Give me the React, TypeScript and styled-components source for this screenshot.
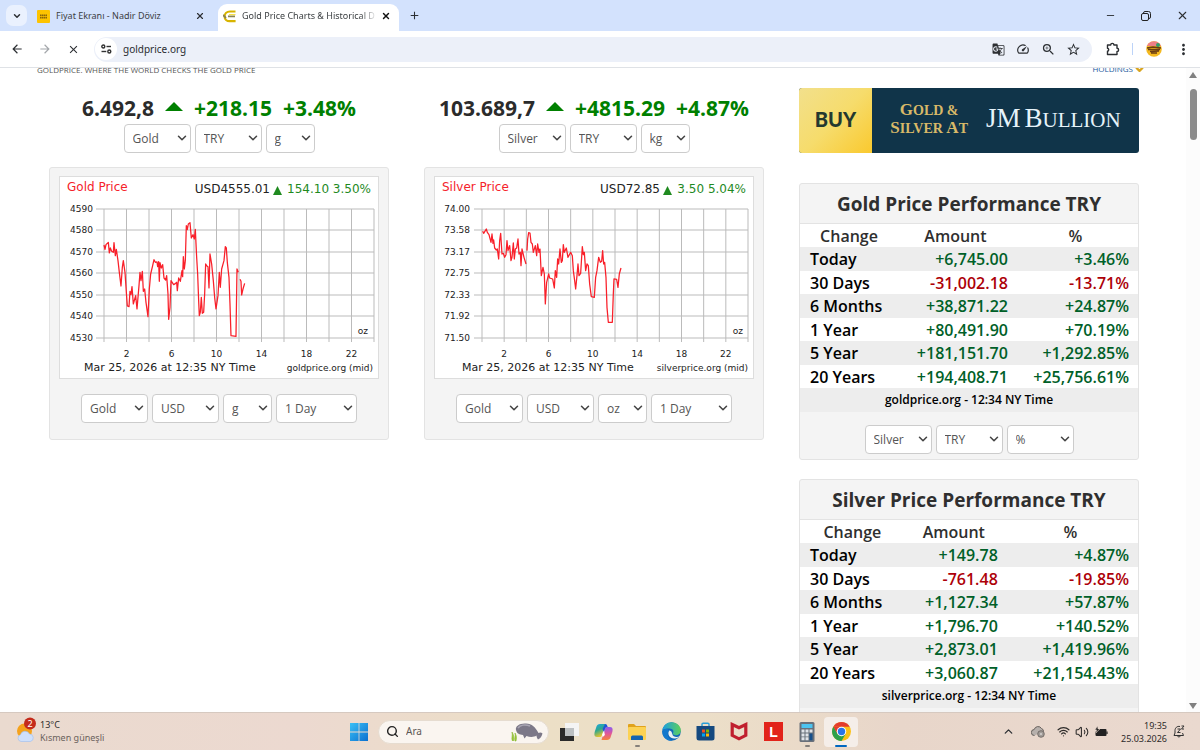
import React from 'react';
import styled, { createGlobalStyle } from 'styled-components';
import {
  MdAdd, MdArrowBack, MdArrowForward, MdClose, MdGTranslate, MdMoreVert, MdSpeed, MdStarBorder, MdZoomIn,
} from 'react-icons/md';
import { ChevronDown, ChevronUp, Minus, Search, Volume2, Wifi, X } from 'lucide-react';

const siteFont = '"Open Sans", "Noto Sans", sans-serif';
const shellFont = '"Noto Sans", "Open Sans", sans-serif';

const GlobalStyle = createGlobalStyle`
  *, *::before, *::after { box-sizing: border-box; }
  html, body, #root { height: 100%; }
  body { margin: 0; overflow: hidden; background: #fff; font-family: ${siteFont}; }
  button, input, select { font: inherit; color: inherit; margin: 0; }
  h1, h2, p { margin: 0; }
  svg { display: block; flex: none; }
`;

const Desktop = styled.div`
  display: flex;
  flex-direction: column;
  height: 100vh;
`;

/* ---------- browser frame ---------- */

const TabStrip = styled.div`
  display: flex;
  align-items: center;
  flex: none;
  height: 31px;
  padding: 0 8px 0 6px;
  background: #d3e2fd;
  font: 9px/16px ${shellFont};
  color: #3c4043;
`;

const IconButton = styled.button<{ $w?: number; $h?: number; $bg?: string; $color?: string }>`
  display: flex;
  align-items: center;
  justify-content: center;
  flex: none;
  width: ${(p) => p.$w ?? 20}px;
  height: ${(p) => p.$h ?? 20}px;
  padding: 0;
  border: 0;
  border-radius: 7px;
  background: ${(p) => p.$bg ?? 'transparent'};
  color: ${(p) => p.$color ?? '#2c2f33'};
`;

const Tab = styled.div<{ $active?: boolean }>`
  display: flex;
  align-items: center;
  align-self: flex-end;
  flex: 0 1 auto;
  width: ${(p) => (p.$active ? 181 : 187)}px;
  height: 27px;
  margin-left: ${(p) => (p.$active ? 0 : 4)}px;
  padding: 0 ${(p) => (p.$active ? 4 : 9)}px 3px ${(p) => (p.$active ? 5 : 6)}px;
  border-radius: 9px 9px 0 0;
  background: ${(p) => (p.$active ? '#fff' : 'transparent')};
`;

const TabTitle = styled.button<{ $fade?: boolean }>`
  flex: 1;
  min-width: 0;
  margin-left: 6px;
  padding: 0;
  border: 0;
  background: none;
  text-align: left;
  white-space: nowrap;
  overflow: hidden;
  ${(p) => p.$fade && 'mask-image: linear-gradient(90deg, #000 88%, transparent);'}
`;

const WindowControls = styled.div`
  display: flex;
  gap: 16px;
  margin-left: auto;
`;

const Toolbar = styled.div`
  display: flex;
  align-items: center;
  flex: none;
  height: 37px;
  padding: 0 8px 0 7px;
  border-bottom: 1px solid #dfe2e6;
  background: #fff;
`;

const NavButtons = styled.div`
  display: flex;
  gap: 8px;
`;

const AddressBar = styled.div`
  display: flex;
  align-items: center;
  flex: 1;
  height: 25px;
  margin-left: 11px;
  padding: 0 9px 0 1px;
  border-radius: 13px;
  background: #ecf0f9;
`;

const SiteInfo = styled.button`
  display: flex;
  align-items: center;
  justify-content: center;
  width: 22px;
  height: 22px;
  padding: 0;
  border: 0;
  border-radius: 50%;
  background: #fff;
`;

const AddressInput = styled.input`
  flex: 1;
  min-width: 0;
  padding: 0 0 0 6px;
  border: 0;
  outline: 0;
  background: none;
  font: 10px/16px ${shellFont};
  color: #2a2c30;
`;

const AddressActions = styled.div`
  display: flex;
  gap: 5px;
`;

const ToolbarEnd = styled.div`
  display: flex;
  align-items: center;
  gap: 8px;
  margin-left: 11px;
`;

const ToolbarDivider = styled.span`
  width: 1px;
  height: 12px;
  margin: 0 1px;
  background: #bcd3f8;
`;

/* ---------- web page ---------- */

const Viewport = styled.div`
  display: flex;
  flex: 1;
  min-height: 0;
`;

const Page = styled.main`
  flex: 1;
  min-width: 0;
  overflow: hidden;
`;

const TopLine = styled.div`
  display: flex;
  justify-content: space-between;
  align-items: flex-end;
  height: 8px;
  padding: 0 41px 0 37px;
  overflow: hidden;
  font-size: 8px;
  line-height: 12px;
  text-transform: uppercase;
  color: #555;
`;

const HoldingsLink = styled.a`
  display: flex;
  align-items: center;
  gap: 1px;
  line-height: 14px;
  color: #1a5ca0;
  text-decoration: none;
`;

const Columns = styled.div`
  display: grid;
  grid-template-columns: repeat(3, minmax(0, 1fr));
  gap: 35px;
  padding: 12px 47px 0 49px;
`;

const Column = styled.section`
  display: flex;
  flex-direction: column;
`;

const SpotPrice = styled.h1`
  display: flex;
  align-items: center;
  justify-content: center;
  gap: 11px;
  height: 36px;
  padding-top: 4px;
  font-size: 21px;
  line-height: 28px;
  font-weight: 700;
  white-space: nowrap;
  color: #2b2b2b;
`;

const Gain = styled.span`
  color: #008000;
`;

const SelectRow = styled.div`
  display: flex;
  justify-content: center;
  gap: 4px;
`;

const SelectBox = styled.label<{ $w: number }>`
  position: relative;
  display: block;
  width: ${(p) => p.$w}px;
  color: #555;

  svg {
    position: absolute;
    top: 7px;
    right: 2px;
    color: #444;
    pointer-events: none;
  }
`;

const NativeSelect = styled.select`
  display: block;
  width: 100%;
  height: 29px;
  padding: 0 8px;
  border: 1px solid #ccc;
  border-radius: 4px;
  background: #fff;
  appearance: none;
  font-size: 12px;
  line-height: 16px;
`;

const ChartPanel = styled.div`
  display: flex;
  flex-direction: column;
  gap: 15px;
  margin-top: 14px;
  padding: 8px 9px 16px;
  border: 1px solid #e3e3e3;
  border-radius: 3px;
  background: #f4f4f4;
`;

const ChartFrame = styled.svg`
  width: 100%;
  height: auto;
  font-family: "DejaVu Sans", sans-serif;
  font-size: 9px;
  fill: #222;
`;

const Banner = styled.a`
  display: flex;
  height: 65px;
  margin: 0 0 30px;
  border-radius: 3px;
  overflow: hidden;
  background: #103449;
  text-decoration: none;
`;

const BannerBuy = styled.span`
  display: flex;
  align-items: center;
  justify-content: center;
  width: 73px;
  padding-bottom: 3px;
  background: linear-gradient(135deg, #f2e08c, #f6dc6c 50%, #fac92e);
  font: 900 20px/24px Lato, sans-serif;
  color: #24382f;
`;

const BannerOffer = styled.span`
  flex: 1;
  display: flex;
  align-items: center;
  justify-content: center;
  gap: 18px;
  padding-bottom: 4px;
  font-family: "Liberation Serif", serif;
  text-transform: uppercase;
  white-space: nowrap;
`;

const Capital = styled.span<{ $size: number }>`
  display: inline-block;
  &::first-letter { font-size: ${(p) => p.$size}px; }
`;

const BannerMetals = styled.span`
  font-size: 14px;
  line-height: 17px;
  font-weight: 700;
  text-align: center;
  color: #d8b968;
`;

const BannerDealer = styled.span`
  display: flex;
  align-items: baseline;
  gap: 4px;
  font-size: 21px;
  line-height: 32px;
  color: #e6f3fa;
`;

const DealerInitials = styled.span`
  font-size: 27px;
`;

const PerformancePanel = styled.div`
  margin-bottom: 19px;
  border: 1px solid #e3e3e3;
  border-radius: 3px;
  background: #f4f4f4;
`;

const PanelTitle = styled.h2`
  height: 40px;
  border-bottom: 1px solid #e3e3e3;
  font-size: 19px;
  line-height: 40px;
  font-weight: 700;
  text-align: center;
  color: #2f2f2f;
`;

const PerformanceTable = styled.table`
  width: 100%;
  border-collapse: collapse;
  table-layout: fixed;
  background: #fff;
  font-size: 16px;
  line-height: 20px;
  font-weight: 600;
  color: #000;

  tr { height: 24px; }
  th, td { padding: 0 5px; font-weight: 600; }
  thead th { color: #2f2f2f; }
  tbody th { padding-left: 10px; text-align: left; }
  tbody td:last-child { padding-right: 9px; }
  thead tr, tbody tr:nth-child(even) { height: 23px; }
  tbody tr:nth-child(odd), tfoot tr { background: #ededed; }
  tfoot td { padding: 0; text-align: center; font-size: 12px; }
`;

const Figure = styled.td<{ $down: boolean }>`
  text-align: right;
  color: ${(p) => (p.$down ? '#ad0008' : '#006028')};
`;

const PanelControls = styled.div`
  padding: 13px 0 5px;
`;

const Scrollbar = styled.div`
  display: flex;
  flex-direction: column;
  align-items: center;
  width: 14px;
  padding: 4px 0 3px;
  background: #fcfcfc;
`;

const ScrollThumb = styled.div`
  width: 7px;
  height: 8%;
  margin: 11px 0 auto;
  border-radius: 4px;
  background: #8b8b8b;
`;

/* ---------- taskbar ---------- */

const Taskbar = styled.footer`
  display: grid;
  grid-template-columns: 1fr auto 1fr;
  align-items: center;
  flex: none;
  height: 38px;
  border-top: 1px solid #d6c9c0;
  background: linear-gradient(90deg, #eadacf 0%, #ecd9d0 25%, #ecdfc6 45%, #ecdfc8 58%, #e8d6ca 75%, #ead9cf 100%);
  font: 10px/13px ${shellFont};
  color: #2d2b2a;
`;

const Weather = styled.button`
  display: flex;
  align-items: center;
  gap: 4px;
  padding: 0 0 2px 16px;
  border: 0;
  background: none;
  text-align: left;
`;

const WeatherText = styled.span`
  display: grid;
  font-size: 9px;
`;

const WeatherNote = styled.span`
  color: #6a625d;
`;

const Apps = styled.div`
  display: flex;
  align-items: center;
`;

const AppButton = styled.button<{ $current?: boolean }>`
  display: flex;
  align-items: center;
  justify-content: center;
  position: relative;
  width: 34px;
  height: 30px;
  padding: 0;
  border: 0;
  border-radius: 4px;
  background: ${(p) => (p.$current ? '#f5eee9' : 'transparent')};
`;

const RunningMark = styled.span<{ $current?: boolean }>`
  position: absolute;
  bottom: 0;
  width: ${(p) => (p.$current ? 12 : 5)}px;
  height: 2px;
  border-radius: 1px;
  background: ${(p) => (p.$current ? '#0067c0' : '#85807b')};
`;

const SearchBox = styled.label`
  display: flex;
  align-items: center;
  width: 171px;
  height: 24px;
  margin: 0 3px 0 2px;
  padding: 0 5px 0 7px;
  border: 1px solid #e6dcd0;
  border-radius: 12px;
  background: #faf5f0;
`;

const SearchInput = styled.input`
  flex: 1;
  min-width: 0;
  margin-left: 7px;
  padding: 0;
  border: 0;
  outline: 0;
  background: none;
  &::placeholder { color: #5c5855; opacity: 1; }
`;

const Tray = styled.div`
  display: flex;
  align-items: center;
  justify-content: flex-end;
  padding-right: 15px;
`;

const TrayGroup = styled.div`
  display: flex;
  align-items: center;
  gap: 5px;
  margin-left: 12px;
`;

const Clock = styled.div`
  margin: 0 6px 0 13px;
  font-size: 9px;
  text-align: right;
`;

/* ---------- data ---------- */

interface ChartSpec {
  title: string;
  price: string;
  priceEnd: number;
  change: string;
  labels: string[];
  labelEnd: number;
  plotLeft: number;
  plotRight: number;
  dateLeft: number;
  site: string;
  series: string[];
}

const goldChart: ChartSpec = {
  title: 'Gold Price',
  price: 'USD4555.01',
  priceEnd: 211,
  change: '154.10 3.50%',
  labels: ['4590', '4580', '4570', '4560', '4550', '4540', '4530'],
  labelEnd: 34,
  plotLeft: 45,
  plotRight: 315,
  dateLeft: 25,
  site: 'goldprice.org (mid)',
  series: [
    '191,253 194,266 197,252 204,245 207,277 210,262 214,272 219,275 221,246 225,285 228,266 233,300 237,335 242,376 246,320 249,300 254,335 258,395 261,436 266,438 269,392 272,402 275,378 279,430 286,405 290,445 296,375 299,335 302,360 306,332 309,392 313,385 317,425 323,468 327,385 331,340 337,315 341,297 345,305 350,304 352,318 355,303 357,362 359,306 363,322 367,312 371,352 376,358 379,345 383,400 385,476 389,440 392,360 396,366 400,372 405,369 409,365 411,390 415,352 420,362 425,330 427,348 429,288 432,325 435,300 438,195 441,207 444,190 449,186 453,232 458,222 462,235 465,206 469,290 472,340 475,420 477,465 480,455 483,410 486,458 490,455 493,400 496,310 499,315 503,318 506,382 509,280 514,310 519,360 523,410 527,445 530,425 533,405 537,335 540,380 544,325 551,300 555,258 558,262 561,305 566,350 569,430 572,525 587,527 590,325 594,335',
    '599,356 602,362 604,403 608,385 613,368',
  ],
};

const silverChart: ChartSpec = {
  title: 'Silver Price',
  price: 'USD72.85',
  priceEnd: 226,
  change: '3.50 5.04%',
  labels: ['74.00', '73.58', '73.17', '72.75', '72.33', '71.92', '71.50'],
  labelEnd: 36,
  plotLeft: 48,
  plotRight: 314,
  dateLeft: 28,
  site: 'silverprice.org (mid)',
  series: [
    '202,212 205,218 210,210 213,205 216,215 221,222 227,245 230,220 233,248 235,238 238,262 243,268 246,265 250,295 253,240 256,218 260,280 264,278 268,290 272,282 275,240 278,270 283,255 287,300 290,290 294,247 297,295 300,265 304,262 308,235 311,280 315,275 317,315 320,265 326,290 332,310',
    '335,270 337,235 340,216 344,217 347,245 351,250 354,275 360,255 364,285 367,250 371,275 374,265 378,345 383,320 387,340 390,430 394,365 400,340 403,352 412,355 417,382 420,330 424,350 427,295 430,310 434,265 438,305 441,300 444,252 447,275 453,262 458,290 466,275 471,285 474,330 478,360 481,385 485,345 488,310 491,345 496,338 501,258 504,282 507,275 511,330 515,310 519,315 523,370 528,408 537,410 541,350 545,330 550,290 555,305 559,302 562,270 565,310 568,305 572,350 575,440 579,485 591,485 594,400 596,355 604,356 608,380 612,340 617,322',
  ],
};

type PerfRow = [string, string, string];

const goldRows: PerfRow[] = [
  ['Today', '+6,745.00', '+3.46%'],
  ['30 Days', '-31,002.18', '-13.71%'],
  ['6 Months', '+38,871.22', '+24.87%'],
  ['1 Year', '+80,491.90', '+70.19%'],
  ['5 Year', '+181,151.70', '+1,292.85%'],
  ['20 Years', '+194,408.71', '+25,756.61%'],
];

const silverRows: PerfRow[] = [
  ['Today', '+149.78', '+4.87%'],
  ['30 Days', '-761.48', '-19.85%'],
  ['6 Months', '+1,127.34', '+57.87%'],
  ['1 Year', '+1,796.70', '+140.52%'],
  ['5 Year', '+2,873.01', '+1,419.96%'],
  ['20 Years', '+3,060.87', '+21,154.43%'],
];

/* ---------- components ---------- */

function Select({ label, value, options, width = 67 }: { label: string; value: string; options: string[]; width?: number }) {
  return (
    <SelectBox $w={width}>
      <NativeSelect aria-label={label} defaultValue={value}>
        {options.map((o) => <option key={o}>{o}</option>)}
      </NativeSelect>
      <ChevronDown size={14} strokeWidth={2.600} />
    </SelectBox>
  );
}

const metals = ['Gold', 'Silver'];
const currencies = ['USD', 'TRY', 'EUR'];
const units = ['oz', 'g', 'kg'];
const periods = ['1 Day', '1 Month', '1 Year'];

function Chart({ spec }: { spec: ChartSpec }) {
  const step = (spec.plotRight - spec.plotLeft) / 12;
  const xs = Array.from({ length: 13 }, (_, i) => spec.plotLeft + i * step);
  const ys = [33, 54, 76, 97, 119, 140, 162];
  return (
    <ChartFrame viewBox="0 0 320 203" role="img" aria-label={spec.title}>
      <rect x="0.5" y="0.5" width="319" height="202" fill="#fff" stroke="#ddd" />
      <g stroke="#bbb">
        {xs.map((x) => <line key={x} x1={x} x2={x} y1="33" y2="166" />)}
        {ys.map((y) => <line key={y} x1={spec.plotLeft - 8} x2={spec.plotRight} y1={y} y2={y} />)}
      </g>
      <g transform="scale(0.3333) translate(-56 -46)" fill="none" stroke="#f9202a" strokeWidth="3.800" strokeLinejoin="round">
        {spec.series.map((points) => <polyline key={points} points={points} />)}
      </g>
      <text x="8" y="15" fontSize="12" fill="#f5222a">{spec.title}</text>
      <text x={spec.priceEnd} y="17" fontSize="12" textAnchor="end">{spec.price}</text>
      <path d={`M${spec.priceEnd + 3} 19 l4.5 -9 l4.5 9 z`} fill="#1f8a1f" />
      <text x="312" y="17" fontSize="12" textAnchor="end" fill="#1f8a1f">{spec.change}</text>
      {spec.labels.map((l, i) => <text key={l} x={spec.labelEnd} y={ys[i] + 3} textAnchor="end">{l}</text>)}
      {[2, 6, 10, 14, 18, 22].map((h, i) => (
        <text key={h} x={xs[1 + i * 2]} y="181" textAnchor="middle">{h}</text>
      ))}
      <text x="309" y="158" textAnchor="end">oz</text>
      <text x={spec.dateLeft} y="195" fontSize="11">Mar 25, 2026 at 12:35 NY Time</text>
      <text x="314" y="195" textAnchor="end">{spec.site}</text>
    </ChartFrame>
  );
}

interface SpotProps {
  price: string; change: string; percent: string;
  metal: string; unit: string; chart: ChartSpec; chartUnit: string;
}

function SpotColumn({ price, change, percent, metal, unit, chart, chartUnit }: SpotProps) {
  return (
    <Column>
      <SpotPrice>
        <span>{price}</span>
        <svg width="18" height="12" viewBox="0 0 18 12"><path d="M0 9L9 0l9 9z" fill="#008000" /></svg>
        <Gain>{change}</Gain>
        <Gain>{percent}</Gain>
      </SpotPrice>
      <SelectRow>
        <Select label="Metal" value={metal} options={metals} />
        <Select label="Currency" value="TRY" options={currencies} />
        <Select label="Unit" value={unit} options={units} width={49} />
      </SelectRow>
      <ChartPanel>
        <Chart spec={chart} />
        <SelectRow>
          <Select label="Chart metal" value="Gold" options={metals} />
          <Select label="Chart currency" value="USD" options={currencies} />
          <Select label="Chart unit" value={chartUnit} options={units} width={49} />
          <Select label="Chart period" value="1 Day" options={periods} width={81} />
        </SelectRow>
      </ChartPanel>
    </Column>
  );
}

function Performance({ title, rows, widths, source }: { title: string; rows: PerfRow[]; widths: string[]; source: string }) {
  return (
    <PerformancePanel>
      <PanelTitle>{title}</PanelTitle>
      <PerformanceTable>
        <colgroup>{widths.map((w, i) => <col key={i} width={w} />)}</colgroup>
        <thead>
          <tr><th scope="col">Change</th><th scope="col">Amount</th><th scope="col">%</th></tr>
        </thead>
        <tbody>
          {rows.map(([period, amount, percent]) => (
            <tr key={period}>
              <th scope="row">{period}</th>
              <Figure $down={amount.startsWith('-')}>{amount}</Figure>
              <Figure $down={percent.startsWith('-')}>{percent}</Figure>
            </tr>
          ))}
        </tbody>
        <tfoot>
          <tr><td colSpan={3}>{source} - 12:34 NY Time</td></tr>
        </tfoot>
      </PerformanceTable>
      <PanelControls>
        <SelectRow>
          <Select label="Metal" value="Silver" options={metals} />
          <Select label="Currency" value="TRY" options={currencies} />
          <Select label="Measure" value="%" options={['%', 'Amount']} />
        </SelectRow>
      </PanelControls>
    </PerformancePanel>
  );
}

function BrowserFrame() {
  return (
    <>
      <TabStrip>
        <IconButton $w={21} $h={21} $bg="#eaf1fe" aria-label="Search tabs"><ChevronDown size={10} strokeWidth={3.5} /></IconButton>
        <Tab>
          <svg width="13" height="13" viewBox="0 0 13 13">
            <rect width="13" height="13" rx="1" fill="#fdc300" />
            <path d="M3 5.200h7M3 7.600h7" stroke="#8a6508" strokeWidth="1.600" strokeDasharray="1.600 .400" />
          </svg>
          <TabTitle>Fiyat Ekranı - Nadir Döviz</TabTitle>
          <IconButton $w={18} $h={18} aria-label="Close tab"><X size={10} strokeWidth={2.800} /></IconButton>
        </Tab>
        <Tab $active>
          <svg width="13" height="13" viewBox="0 0 13 13" fill="none">
            <path d="M12.500 1.500H7C3.500 1.500 1.600 4 1.600 6.400c0 3 2.300 4.800 5 4.800h6" stroke="#d8b400" strokeWidth="2.200" />
            <path d="M0 5l3 3M5 6.400h7" stroke="#8b8350" strokeWidth="1.800" />
            <path d="M6 4.600h6.500" stroke="#f6e34c" strokeWidth="1.200" />
          </svg>
          <TabTitle $fade>Gold Price Charts &amp; Historical D</TabTitle>
          <IconButton $w={18} $h={18} $color="#111" aria-label="Close tab"><X size={10} strokeWidth={3.400} /></IconButton>
        </Tab>
        <IconButton $w={30} aria-label="New tab"><MdAdd size={13} /></IconButton>
        <WindowControls>
          <IconButton aria-label="Minimize"><Minus size={11} strokeWidth={2} /></IconButton>
          <IconButton aria-label="Restore">
            <svg width="10" height="10" viewBox="0 0 10 10" fill="none" stroke="#222" strokeWidth="1">
              <rect x="0.5" y="2.500" width="7" height="7" rx="1.500" />
              <path d="M2.500 2.500V2A1.500 1.500 0 0 1 4 .5h3.500a2 2 0 0 1 2 2V6A1.500 1.500 0 0 1 8 7.500h-.5" />
            </svg>
          </IconButton>
          <IconButton aria-label="Close"><X size={13} strokeWidth={2} /></IconButton>
        </WindowControls>
      </TabStrip>
      <Toolbar>
        <NavButtons>
          <IconButton aria-label="Back"><MdArrowBack size={14} /></IconButton>
          <IconButton aria-label="Forward" $color="#a4a7ab"><MdArrowForward size={14} /></IconButton>
          <IconButton aria-label="Stop"><MdClose size={13} /></IconButton>
        </NavButtons>
        <AddressBar>
          <SiteInfo aria-label="Site information">
            <svg width="11" height="10" viewBox="0 0 11 10" fill="none" stroke="#333" strokeWidth="1.400">
              <circle cx="2.300" cy="2.500" r="1.500" /><path d="M5.500 2.500H10" />
              <circle cx="8.300" cy="7.500" r="1.500" /><path d="M.5 7.500h4.800" />
            </svg>
          </SiteInfo>
          <AddressInput aria-label="Address" defaultValue="goldprice.org" />
          <AddressActions>
            <IconButton aria-label="Translate"><MdGTranslate size={13} /></IconButton>
            <IconButton aria-label="Performance"><MdSpeed size={14} /></IconButton>
            <IconButton aria-label="Zoom"><MdZoomIn size={15} /></IconButton>
            <IconButton aria-label="Bookmark"><MdStarBorder size={15} /></IconButton>
          </AddressActions>
        </AddressBar>
        <ToolbarEnd>
          <IconButton aria-label="Extensions">
            <svg width="14" height="14" viewBox="0 0 14 14" fill="none" stroke="#2c2f33" strokeWidth="1.400" strokeLinejoin="round">
              <path d="M1.500 3h3.200a1.600 1.600 0 0 1 3.200 0h3.100v3.300a1.600 1.600 0 0 1 0 3.200V12.500h-9.500V9.300a1.600 1.600 0 0 0 0-3.100z" />
            </svg>
          </IconButton>
          <ToolbarDivider />
          <IconButton $w={24} aria-label="Profile">
            <svg width="16" height="16" viewBox="0 0 16 16">
              <clipPath id="avatar"><circle cx="8" cy="8" r="7.800" /></clipPath>
              <g clipPath="url(#avatar)">
                <rect width="16" height="16" fill="#f4b91f" />
                <path d="M0 0h16v5H0z" fill="#ee7f86" />
                <circle cx="12" cy="4" r="2" fill="#2f9f6a" />
                <path d="M1 7l6-1 8 1M2 8.500h12M4 10.500l9-.5M5 12l6 0" stroke="#6b3d12" strokeWidth="1.400" />
              </g>
            </svg>
          </IconButton>
          <IconButton $w={18} aria-label="Menu"><MdMoreVert size={17} /></IconButton>
        </ToolbarEnd>
      </Toolbar>
    </>
  );
}

function TaskbarApp({ name, running, current, children }: { name: string; running?: boolean; current?: boolean; children: React.ReactNode }) {
  return (
    <AppButton aria-label={name} $current={current}>
      {children}
      {(running || current) && <RunningMark $current={current} />}
    </AppButton>
  );
}

function DesktopTaskbar() {
  return (
    <Taskbar>
      <Weather>
        <svg width="20" height="28" viewBox="0 0 20 28">
          <circle cx="8.500" cy="14" r="7.500" fill="#f5a21c" />
          <path d="M5 24.500a3.500 3.500 0 0 1-.5-6.800 4.800 4.800 0 0 1 9-.7 3.800 3.800 0 0 1 .8 7.500z" fill="#cfe0fb" stroke="#9cbdf0" strokeWidth=".6" />
          <circle cx="14" cy="6.500" r="6" fill="#c42b1c" />
          <text x="14" y="10" fontSize="9" textAnchor="middle" fill="#fff">2</text>
        </svg>
        <WeatherText><span>13°C</span><WeatherNote>Kısmen güneşli</WeatherNote></WeatherText>
      </Weather>
      <Apps>
        <TaskbarApp name="Start">
          <svg width="18" height="18" viewBox="0 0 18 18">
            <linearGradient id="win" x2="1" y2="1"><stop stopColor="#3bc0f5" /><stop offset="1" stopColor="#0a6fd0" /></linearGradient>
            <path d="M0 0h8.600v8.600H0zM9.400 0H18v8.600H9.400zM0 9.400h8.600V18H0zM9.400 9.400H18V18H9.400z" fill="url(#win)" />
          </svg>
        </TaskbarApp>
        <SearchBox>
          <Search size={13} strokeWidth={2.600} color="#222" />
          <SearchInput placeholder="Ara" aria-label="Ara" />
          <svg width="33" height="20" viewBox="0 0 33 20">
            <path d="M2.500 19C1 16 3 14 2 10c2 3 2 6 1.500 9M5 19c-1-3 1-5 0-8 2 3 1.500 6 1 8z" fill="#9cc93c" stroke="#86b52c" strokeWidth=".6" />
            <path d="M6 8C5 4 10 1 16 1.500c6 0 9.500 4 12.500 9.500 1.500-1 3-.5 4 .5-.8 3-2 5-4.500 6-1-1.500-1.500-2.500-1.500-4-3 2-7 1.500-10 .5l-2 2.500-1.500-3.500C9.500 12.500 7 12 6 8z" fill="#7c7888" />
            <path d="M8 6c2-3 7-4 12-2" stroke="#a9a5b3" strokeWidth="1.500" fill="none" />
          </svg>
        </SearchBox>
        <TaskbarApp name="Task view">
          <svg width="20" height="18" viewBox="0 0 20 18">
            <rect x="6" y="0" width="14" height="13" fill="#f4f4f4" />
            <rect x="1" y="5" width="14" height="13" fill="#2a2a2a" />
            <rect x="6" y="5" width="9" height="8" fill="#bcc0c2" />
          </svg>
        </TaskbarApp>
        <TaskbarApp name="Copilot">
          <svg width="19" height="18" viewBox="0 0 19 18">
            <defs>
              <linearGradient id="cpa" x2=".4" y2="1"><stop stopColor="#1ba6e8" /><stop offset=".5" stopColor="#2ea78f" /><stop offset="1" stopColor="#e8c52b" /></linearGradient>
              <linearGradient id="cpb" x2="0" y2="1"><stop stopColor="#8a5cf0" /><stop offset=".5" stopColor="#e0579a" /><stop offset="1" stopColor="#f5833c" /></linearGradient>
            </defs>
            <path d="M6 1h5.500L8 12c-.5 1.500-1 2-2.500 2H3C0 14 0 11 1 8l1.500-4.500C3 2 4 1 6 1z" fill="url(#cpa)" />
            <path d="M13 17H7.500L11 6c.5-1.500 1-2 2.500-2H16c3 0 3 3 2 6l-1.500 4.500C16 16 15 17 13 17z" fill="url(#cpb)" />
            <path d="M11 1c2 0 2 1 2.700 3-1.700 0-2.200.5-2.700 2L9.800 9.600 8.500 6z" fill="#1f55d6" />
            <path d="M8.200 11.500l1.800-4 .8 4c-.5 1.500-1 2-2.300 2.300z" fill="#fff" />
          </svg>
        </TaskbarApp>
        <TaskbarApp name="File Explorer" running>
          <svg width="20" height="18" viewBox="0 0 20 18">
            <path d="M1 2a1 1 0 0 1 1-1h5l2 2h9a1 1 0 0 1 1 1v5H1z" fill="#e0a21c" />
            <rect x="1" y="4" width="18" height="13" rx="1" fill="#fcd253" />
            <path d="M4 17v-3a1.500 1.500 0 0 1 1.500-1.500h9A1.500 1.500 0 0 1 16 14v3z" fill="#1665b0" />
          </svg>
        </TaskbarApp>
        <TaskbarApp name="Edge">
          <svg width="19" height="19" viewBox="0 0 19 19">
            <linearGradient id="edge" x2="1"><stop stopColor="#1b9de2" /><stop offset="1" stopColor="#5ed15a" /></linearGradient>
            <circle cx="9.500" cy="9.500" r="9.300" fill="#1268b8" />
            <path d="M.3 8.500C1 3.500 5 .2 9.500.2c5.500 0 9.300 4 9.300 8 0 3-2.300 5-5 5-2 0-3.300-.8-3-1.600 1.500-2 .3-5-3.300-5C4 6.600 1 7 .3 8.500z" fill="url(#edge)" />
            <path d="M7 8.500c-2 4 1 8.500 6 8 2 0 3.500-1 4.500-2.200-2 1-7 1-7.200-2.500-1-1 .5-2.500-3.300-3.300z" fill="#e9f2f4" />
            <path d="M7 8.500c-3 4-.5 9 3.500 10.200C5 19.500 0 15 .3 9.500 1 7 5 6 7 8.500z" fill="#1378cc" />
          </svg>
        </TaskbarApp>
        <TaskbarApp name="Microsoft Store">
          <svg width="19" height="19" viewBox="0 0 19 19">
            <path d="M6 5V2.500A1.200 1.200 0 0 1 7.200 1.200h4.600A1.200 1.200 0 0 1 13 2.500V5" fill="none" stroke="#2a9fd8" strokeWidth="1.400" />
            <path d="M.5 4h18v12a2.500 2.500 0 0 1-2.500 2.500H3A2.500 2.500 0 0 1 .5 16z" fill="#15497f" />
            <path d="M6 7.500h3v3H6z" fill="#f25022" /><path d="M10 7.500h3v3h-3z" fill="#7fba00" />
            <path d="M6 11.500h3v3H6z" fill="#00a4ef" /><path d="M10 11.500h3v3h-3z" fill="#ffb900" />
          </svg>
        </TaskbarApp>
        <TaskbarApp name="McAfee">
          <svg width="18" height="19" viewBox="0 0 18 19">
            <path d="M2.200 2.500L9 5.800l6.800-3.300v10.800L9 16.800l-6.800-3.500z" fill="none" stroke="#c01f2e" strokeWidth="3.200" />
          </svg>
        </TaskbarApp>
        <TaskbarApp name="L">
          <svg width="19" height="19" viewBox="0 0 19 19">
            <rect width="19" height="19" fill="#e2231a" />
            <text x="9.500" y="15" textAnchor="middle" fontSize="14" fontWeight="700" fill="#fff" fontFamily="Liberation Sans, sans-serif">L</text>
          </svg>
        </TaskbarApp>
        <TaskbarApp name="Calculator" running>
          <svg width="16" height="20" viewBox="0 0 16 20">
            <rect x=".5" width="15" height="20" rx="1.500" fill="#69707a" />
            <rect x="2.500" y="2" width="11" height="4" fill="#4cc4f0" />
            <path d="M2.500 7.500h3v3h-3zM6.500 7.500h3v3h-3zM10.500 7.500h3v3h-3zM2.500 11.500h3v3h-3zM6.500 11.500h3v3h-3zM2.500 15.300h3v3h-3zM6.500 15.300h3v3h-3z" fill="#dfe3e8" />
            <path d="M10.500 11.500h3v6.800h-3z" fill="#16508c" />
          </svg>
        </TaskbarApp>
        <TaskbarApp name="Chrome" current>
          <svg width="19" height="19" viewBox="0 0 20 20">
            <circle cx="10" cy="10" r="10" fill="#fbc116" />
            <path d="M1.340 5A10 10 0 0 1 18.660 5H10z" fill="#e33b2e" />
            <path d="M1.340 5L5.670 12.500 10 15l4.330-2.500L10 20A10 10 0 0 1 1.340 5z" fill="#2da14c" />
            <path d="M1.340 5L5.670 12.500 10 5z" fill="#e33b2e" />
            <path d="M1.340 5l4.330 7.500L4 14 1 8z" fill="#2da14c" />
            <circle cx="10" cy="10" r="5" fill="#fff" /><circle cx="10" cy="10" r="3.900" fill="#2a75e8" />
          </svg>
        </TaskbarApp>
      </Apps>
      <Tray>
        <IconButton aria-label="Show hidden icons"><ChevronUp size={13} strokeWidth={2.400} /></IconButton>
        <TrayGroup>
          <svg width="14" height="13" viewBox="0 0 14 13">
            <path d="M3.500 10.500a3 3 0 0 1-.3-6A4 4 0 0 1 10.500 3.500a3 3 0 0 1 2 3" fill="#b7b0ac" stroke="#67615d" />
            <circle cx="10" cy="9" r="3.300" fill="#a29c98" stroke="#66605c" strokeWidth=".8" />
            <path d="M9 9h2" stroke="#eee" />
          </svg>
        </TrayGroup>
        <TrayGroup>
          <Wifi size={13} strokeWidth={2.200} />
          <Volume2 size={14} strokeWidth={1.800} />
          <svg width="14" height="11" viewBox="0 0 14 11">
            <path d="M3.500 3h8a1 1 0 0 1 1 1v5a1 1 0 0 1-1 1h-9a1 1 0 0 1-1-1V6" fill="#222" />
            <path d="M13 5.500v2.500" stroke="#222" strokeWidth="1.200" />
            <path d="M3.500 0L1 4h2l-1 3 4-4H4z" fill="#222" stroke="#ead9cf" strokeWidth=".5" />
          </svg>
        </TrayGroup>
        <Clock><div>19:35</div><div>25.03.2026</div></Clock>
        <svg width="12" height="13" viewBox="0 0 12 13" fill="none" stroke="#333" strokeWidth="1">
          <path d="M7 1.500C4 .8 2 3 2 5.500V8L1 10.500h9.500L9.500 8M4.500 11a1.500 1.500 0 0 0 2.800 0" />
          <path d="M4.500 4h3L4.500 7.500h3M8.500 1h2.500L8.500 4H11" />
        </svg>
      </Tray>
    </Taskbar>
  );
}

export default function App() {
  return (
    <Desktop>
      <GlobalStyle />
      <BrowserFrame />
      <Viewport>
        <Page>
          <TopLine>
            <span>GoldPrice. Where the world checks the gold price</span>
            <HoldingsLink href="#holdings">Holdings <ChevronDown size={11} strokeWidth={5} color="#d9a520" /></HoldingsLink>
          </TopLine>
          <Columns>
            <SpotColumn price="6.492,8" change="+218.15" percent="+3.48%" metal="Gold" unit="g" chart={goldChart} chartUnit="g" />
            <SpotColumn price="103.689,7" change="+4815.29" percent="+4.87%" metal="Silver" unit="kg" chart={silverChart} chartUnit="oz" />
            <Column>
              <Banner href="#jmbullion">
                <BannerBuy>BUY</BannerBuy>
                <BannerOffer>
                  <BannerMetals>
                    <Capital $size={17}>Gold</Capital> <Capital $size={17}>&amp;</Capital>
                    <br />
                    <Capital $size={17}>Silver</Capital> <Capital $size={17}>At</Capital>
                  </BannerMetals>
                  <BannerDealer>
                    <DealerInitials>JM</DealerInitials>
                    <Capital $size={27}>Bullion</Capital>
                  </BannerDealer>
                </BannerOffer>
              </Banner>
              <Performance title="Gold Price Performance TRY" rows={goldRows} widths={['29%', '34%', '37%']} source="goldprice.org" />
              <Performance title="Silver Price Performance TRY" rows={silverRows} widths={['31%', '29%', '40%']} source="silverprice.org" />
            </Column>
          </Columns>
        </Page>
        <Scrollbar>
          <svg width="8" height="6" viewBox="0 0 8 6"><path d="M0 6L4 0l4 6z" fill="#808080" /></svg>
          <ScrollThumb />
          <svg width="8" height="6" viewBox="0 0 8 6"><path d="M0 0L4 6l4-6z" fill="#808080" /></svg>
        </Scrollbar>
      </Viewport>
      <DesktopTaskbar />
    </Desktop>
  );
}
